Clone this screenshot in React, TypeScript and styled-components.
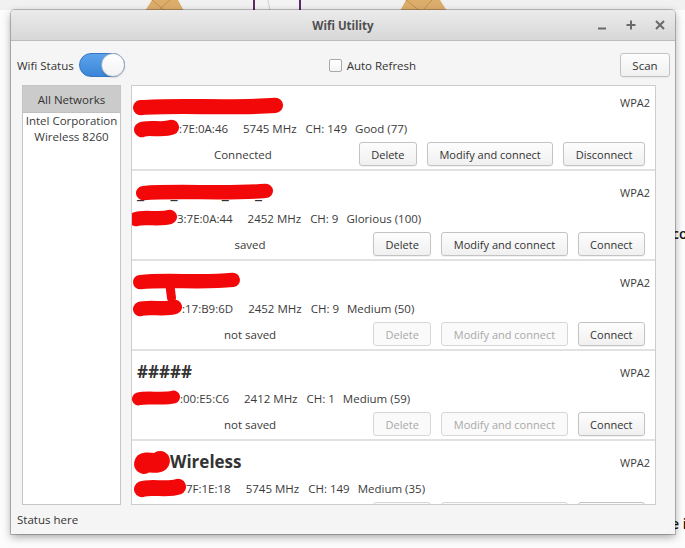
import React from "react";
import styled, { createGlobalStyle } from "styled-components";

const GlobalStyle = createGlobalStyle`
  html, body { margin: 0; padding: 0; }
  body {
    background: #fbfbfb;
    font-family: "Open Sans", "Noto Sans", sans-serif;
    font-size: 11.5px;
    color: #333;
  }
  * { box-sizing: border-box; }
`;

const Desktop = styled.div`
  position: relative;
  width: 685px;
  height: 548px;
  overflow: hidden;
  padding: 10px 0 0 11px;
  background: linear-gradient(#f1f1f1 0, #f1f1f1 10px, #fcfcfc 10px);
`;

const DesktopIcons = styled.svg`
  position: absolute;
  left: 0;
  top: 0;
`;

const BehindText = styled.span<{ $x: number; $y: number }>`
  position: absolute;
  left: ${(p) => p.$x}px;
  top: ${(p) => p.$y}px;
  font-size: 14px;
  color: #111;
  font-weight: 600;
  white-space: nowrap;
`;

const Window = styled.div`
  position: relative;
  z-index: 1;
  width: 664px;
  height: 524px;
  display: flex;
  flex-direction: column;
  background: #f5f5f5;
  border-radius: 4px 4px 0 0;
  box-shadow: 0 0 0 1px rgba(0, 0, 0, 0.22), 0 3px 9px rgba(0, 0, 0, 0.35);
`;

const TitleBar = styled.div`
  height: 31px;
  flex: none;
  display: grid;
  grid-template-columns: 1fr auto 1fr;
  align-items: center;
  background: linear-gradient(#ebebeb, #d7d7d7);
  border-bottom: 1px solid #bcbcbc;
  border-radius: 4px 4px 0 0;
`;

const Title = styled.div`
  grid-column: 2;
  font-weight: 700;
  font-size: 11.5px;
  color: #4e4e4e;
`;

const Controls = styled.div`
  grid-column: 3;
  justify-self: end;
  display: flex;
  padding-right: 1px;
`;

const ControlBtn = styled.div`
  width: 29px;
  height: 20px;
  display: flex;
  align-items: center;
  justify-content: center;
`;

const Body = styled.div`
  flex: 1;
  display: flex;
  flex-direction: column;
  padding: 12px 0 0 6px;
  min-height: 0;
`;

const Toolbar = styled.div`
  height: 24px;
  display: flex;
  align-items: center;
  margin-right: 5px;
`;

const ToolGroup = styled.div`
  display: flex;
  align-items: center;
  gap: 5px;
`;

const ToolCenter = styled.label`
  flex: 1;
  display: flex;
  align-items: center;
  justify-content: center;
  gap: 5px;
`;

const Label = styled.span`
  color: #333;
`;

const Switch = styled.div<{ $on: boolean }>`
  width: 46px;
  height: 24px;
  border-radius: 12px;
  background: ${(p) => (p.$on ? "linear-gradient(#5ea3ec, #3a86d8)" : "#ddd")};
  border: 1px solid #3476c4;
  display: flex;
  justify-content: ${(p) => (p.$on ? "flex-end" : "flex-start")};
  align-items: center;
`;

const Knob = styled.div`
  width: 24px;
  height: 24px;
  margin: -1px;
  border-radius: 50%;
  background: linear-gradient(#ffffff, #f2f2f2);
  border: 1px solid #9fb0c4;
  box-shadow: 0 1px 1px rgba(0, 0, 0, 0.15);
`;

const CheckBox = styled.span`
  width: 13px;
  height: 13px;
  border: 1px solid #a9a9a9;
  border-radius: 2px;
  background: linear-gradient(#ffffff, #f4f4f4);
`;

const Button = styled.button<{ $disabled?: boolean }>`
  height: 24px;
  padding: 0 11.5px;
  font-family: inherit;
  font-size: 11px;
  color: ${(p) => (p.$disabled ? "#a9a9a9" : "#333")};
  background: ${(p) => (p.$disabled ? "#fafafa" : "linear-gradient(#fdfdfd, #f0f0f0)")};
  border: 1px solid ${(p) => (p.$disabled ? "#d7d7d7" : "#c3c3c3")};
  border-radius: 3px;
  box-shadow: ${(p) => (p.$disabled ? "none" : "0 1px 1px rgba(0,0,0,0.06)")};
  white-space: nowrap;
`;

const ScanButton = styled(Button)`
  width: 50px;
  padding: 0;
  font-size: 11.5px;
`;

const Main = styled.div`
  margin-top: 8px;
  flex: 1;
  min-height: 0;
  display: flex;
  gap: 10px;
  padding-left: 5px;
  margin-right: 19px;
`;

const Sidebar = styled.div`
  width: 99px;
  border: 1px solid #c5c5c5;
  background: #fff;
  display: flex;
  flex-direction: column;
`;

const SideHeader = styled.div`
  height: 27px;
  display: flex;
  align-items: center;
  justify-content: center;
  background: #cbcbcb;
  border-bottom: 1px solid #c0c0c0;
  color: #333;
`;

const SideItem = styled.div`
  text-align: center;
  line-height: 16px;
  color: #3a3a3a;
`;

const List = styled.div`
  flex: 1;
  border: 1px solid #cdcdcd;
  background: #fff;
  overflow: hidden;
`;

const ListInner = styled.div`
  margin-top: -5px;
`;

const Card = styled.div`
  height: 90px;
  padding: 10px 5px 4px 5px;
  border-bottom: 2px solid #e1e1e1;
  display: flex;
  flex-direction: column;
`;

const SsidRow = styled.div`
  height: 22px;
  display: flex;
  align-items: center;
`;

const Ssid = styled.div`
  position: relative;
  height: 22px;
  line-height: 22px;
  font-size: 17px;
  font-weight: 700;
  color: #333;
  display: flex;
  align-items: center;
  white-space: pre;
`;

const Security = styled.div`
  margin-left: auto;
  font-size: 11px;
  color: #3a3a3a;
`;

const InfoRow = styled.div`
  margin-top: 7px;
  height: 16px;
  display: flex;
  align-items: center;
  color: #3a3a3a;
  white-space: nowrap;
`;

const Info = styled.span<{ $gap: number }>`
  margin-right: ${(p) => p.$gap}px;
`;

const ActionRow = styled.div`
  margin-top: 6px;
  margin-right: 5px;
  height: 24px;
  display: flex;
  align-items: center;
  gap: 10px;
`;

const StateText = styled.div`
  flex: 1;
  text-align: center;
  color: #3a3a3a;
`;

const StatusBar = styled.div`
  height: 29px;
  flex: none;
  display: flex;
  align-items: center;
  color: #333;
`;

const RedactSvg = styled.svg<{ $ml?: number; $overlay?: boolean; $left?: number; $top?: number }>`
  flex: none;
  display: block;
  margin-left: ${(p) => p.$ml ?? 0}px;
  position: ${(p) => (p.$overlay ? "absolute" : "static")};
  left: ${(p) => p.$left ?? 0}px;
  top: ${(p) => p.$top ?? 0}px;
  overflow: visible;
`;

type Blob = { w: number; h: number; ml?: number; left?: number; top?: number; drip?: number };

const Redact = ({ b, overlay }: { b: Blob; overlay?: boolean }) => {
  const s = b.h * 0.8;
  const r = s / 2;
  const d = `M ${r} ${b.h * 0.56} C ${b.w * 0.3} ${b.h * 0.4}, ${b.w * 0.65} ${b.h * 0.62}, ${b.w - r} ${b.h * 0.44}`;
  return (
    <RedactSvg
      width={b.w}
      height={b.h}
      viewBox={`0 0 ${b.w} ${b.h}`}
      $ml={b.ml}
      $overlay={overlay}
      $left={b.left}
      $top={b.top}
    >
      <path d={d} stroke="#f20808" strokeWidth={s} strokeLinecap="round" fill="none" />
      {b.drip ? (
        <path
          d={`M ${b.w * 0.34} ${b.h * 0.5} L ${b.w * 0.36} ${b.h + b.drip}`}
          stroke="#f20808"
          strokeWidth={9}
          strokeLinecap="round"
        />
      ) : null}
    </RedactSvg>
  );
};

type Net = {
  hidden?: string;
  ssidBlob?: Blob;
  prefixBlob?: Blob;
  visible?: string;
  macBlob: Blob;
  mac: string;
  freq: string;
  ch: string;
  quality: string;
  state: string;
  main: string;
  saved: boolean;
};

const nets: Net[] = [
  {
    hidden: "",
    ssidBlob: { w: 150, h: 19, left: -4, top: 6 },
    macBlob: { w: 45, h: 19, ml: -3 },
    mac: ":7E:0A:46",
    freq: "5745 MHz",
    ch: "CH: 149",
    quality: "Good (77)",
    state: "Connected",
    main: "Disconnect",
    saved: true,
  },
  {
    hidden: "_      _          _      _",
    ssidBlob: { w: 137, h: 18, left: -1, top: 2 },
    macBlob: { w: 48, h: 18, ml: -8 },
    mac: "3:7E:0A:44",
    freq: "2452 MHz",
    ch: "CH: 9",
    quality: "Glorious (100)",
    state: "saved",
    main: "Connect",
    saved: true,
  },
  {
    hidden: "",
    ssidBlob: { w: 107, h: 18, left: -4, top: 1, drip: 8 },
    macBlob: { w: 49, h: 18, ml: -4 },
    mac: ":17:B9:6D",
    freq: "2452 MHz",
    ch: "CH: 9",
    quality: "Medium (50)",
    state: "not saved",
    main: "Connect",
    saved: false,
  },
  {
    visible: "#####",
    macBlob: { w: 48, h: 16, ml: -5 },
    mac: ":00:E5:C6",
    freq: "2412 MHz",
    ch: "CH: 1",
    quality: "Medium (59)",
    state: "not saved",
    main: "Connect",
    saved: false,
  },
  {
    prefixBlob: { w: 36, h: 25, ml: -3 },
    visible: "Wireless",
    macBlob: { w: 52, h: 20, ml: -3 },
    mac: "7F:1E:18",
    freq: "5745 MHz",
    ch: "CH: 149",
    quality: "Medium (35)",
    state: "not saved",
    main: "Connect",
    saved: false,
  },
];

const NetworkCard = ({ n }: { n: Net }) => (
  <Card>
    <SsidRow>
      <Ssid>
        {n.hidden}
        {n.ssidBlob ? <Redact b={n.ssidBlob} overlay /> : null}
        {n.prefixBlob ? <Redact b={n.prefixBlob} /> : null}
        {n.visible}
      </Ssid>
      <Security>WPA2</Security>
    </SsidRow>
    <InfoRow>
      <Redact b={n.macBlob} />
      <Info $gap={15}>{n.mac}</Info>
      <Info $gap={9}>{n.freq}</Info>
      <Info $gap={8}>{n.ch}</Info>
      <Info $gap={0}>{n.quality}</Info>
    </InfoRow>
    <ActionRow>
      <StateText>{n.state}</StateText>
      <Button $disabled={!n.saved}>Delete</Button>
      <Button $disabled={!n.saved}>Modify and connect</Button>
      <Button>{n.main}</Button>
    </ActionRow>
  </Card>
);

export default function App() {
  return (
    <>
      <GlobalStyle />
      <Desktop>
        <DesktopIcons width="685" height="12" viewBox="0 0 685 12">
          <path d="M145 11 L152 0 L178 0 L184 11 Z" fill="#dcae6c" />
          <path d="M152 0 L165 11 M170 0 L160 9" stroke="#c58d48" strokeWidth="1" />
          <rect x="253" y="-2" width="48" height="14" fill="#f3f3f3" />
          <path d="M254 0 L254 11 M300 0 L300 11" stroke="#5b2b66" strokeWidth="2" />
          <path d="M268 0 L270 11" stroke="#cfcfcf" strokeWidth="1" />
          <path d="M400 11 L406 0 L440 0 L447 11 Z" fill="#dcae6c" />
          <path d="M406 0 L420 11 M432 0 L424 9" stroke="#c58d48" strokeWidth="1" />
        </DesktopIcons>
        <BehindText $x={672} $y={224}>co</BehindText>
        <BehindText $x={671} $y={514}>e i</BehindText>
        <Window>
          <TitleBar>
            <Title>Wifi Utility</Title>
            <Controls>
              <ControlBtn>
                <svg width="10" height="10" viewBox="0 0 10 10">
                  <path d="M1 8.5 H9" stroke="#6a6a6a" strokeWidth="2" />
                </svg>
              </ControlBtn>
              <ControlBtn>
                <svg width="10" height="10" viewBox="0 0 10 10">
                  <path d="M0.5 5 H9.5 M5 0.5 V9.5" stroke="#6a6a6a" strokeWidth="2" />
                </svg>
              </ControlBtn>
              <ControlBtn>
                <svg width="10" height="10" viewBox="0 0 10 10">
                  <path d="M1 1 L9 9 M9 1 L1 9" stroke="#6a6a6a" strokeWidth="2" />
                </svg>
              </ControlBtn>
            </Controls>
          </TitleBar>
          <Body>
            <Toolbar>
              <ToolGroup>
                <Label>Wifi Status</Label>
                <Switch $on>
                  <Knob />
                </Switch>
              </ToolGroup>
              <ToolCenter>
                <CheckBox />
                <Label>Auto Refresh</Label>
              </ToolCenter>
              <ScanButton>Scan</ScanButton>
            </Toolbar>
            <Main>
              <Sidebar>
                <SideHeader>All Networks</SideHeader>
                <SideItem>
                  Intel Corporation
                  <br />
                  Wireless 8260
                </SideItem>
              </Sidebar>
              <List>
                <ListInner>
                  {nets.map((n, i) => (
                    <NetworkCard key={i} n={n} />
                  ))}
                </ListInner>
              </List>
            </Main>
            <StatusBar>Status here</StatusBar>
          </Body>
        </Window>
      </Desktop>
    </>
  );
}
